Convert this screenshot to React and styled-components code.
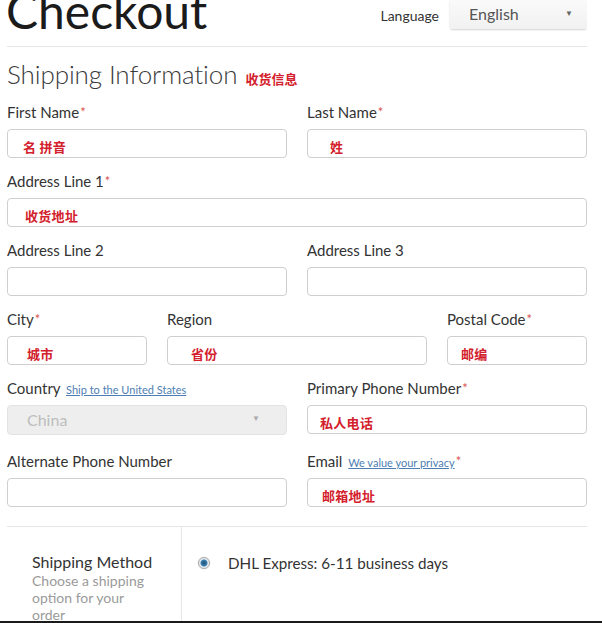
import styled, { createGlobalStyle } from "styled-components";

const GlobalStyle = createGlobalStyle`
    html, body {
        margin: 0;
        padding: 0;
        background: #fff;
        overflow: hidden;
    }
    body {
        font-family: Lato, "Liberation Sans", sans-serif;
        color: #333;
    }
`;

const Page = styled.div`
    width: 580px;
    margin-left: 7px;
    height: 621px;
    overflow: hidden;
`;

const BottomEdge = styled.div`
    height: 2px;
    background: #1a1a1a;
`;

const Header = styled.div`
    display: flex;
    justify-content: space-between;
    align-items: flex-start;
    height: 46px;
    border-bottom: 1px solid #e6e6e6;
`;

const Title = styled.h1`
    margin: -13px 0 0 -1px;
    font-size: 48px;
    line-height: 48px;
    font-weight: 400;
    color: #1b1b1b;
`;

const LangBox = styled.div`
    display: flex;
    align-items: flex-start;
    gap: 11px;
`;

const LangLabel = styled.span`
    font-size: 14px;
    line-height: 20px;
    color: #333;
    margin-top: 6px;
`;

const LangSelect = styled.div`
    width: 137px;
    height: 29px;
    box-sizing: border-box;
    display: flex;
    align-items: center;
    justify-content: space-between;
    padding: 0 14px 3px 19px;
    background: linear-gradient(#fafafa, #f1f1f1);
    border-radius: 0 0 3px 3px;
    box-shadow: 0 1px 2px rgba(0, 0, 0, 0.18);
    font-size: 16px;
    color: #555;
`;

const Caret = styled.span`
    font-size: 8px;
    color: #666;
`;

const SectionTitle = styled.h2`
    margin: 11px 0 0;
    font-size: 26px;
    line-height: 32px;
    font-weight: 300;
    color: #3a3a3a;
    display: flex;
    align-items: baseline;
    gap: 8px;
    letter-spacing: -0.1px;
`;

const Note = styled.span`
    font-family: "Noto Sans CJK SC", sans-serif;
    font-size: 13px;
    font-weight: 700;
    color: #d3202c;
    letter-spacing: 0;
`;

const Row = styled.div`
    display: grid;
    grid-template-columns: ${(p) => p.$cols || "1fr 1fr"};
    column-gap: 20px;
    margin-top: ${(p) => p.$top || 0}px;
    margin-bottom: ${(p) => p.$bottom || 0}px;
`;

const Field = styled.div`
    display: flex;
    flex-direction: column;
    margin-bottom: 16px;
`;

const Label = styled.label`
    font-size: 15px;
    line-height: 14px;
    height: 14px;
    margin-bottom: 10px;
    white-space: nowrap;
    color: #333;
`;

const Star = styled.span`
    color: #d9534f;
    font-size: 13px;
    vertical-align: 1px;
    margin-left: 1px;
`;

const Hint = styled.a`
    font-size: 11px;
    color: #4d7eb3;
    text-decoration: underline;
    margin-left: 2px;
`;

const Input = styled.div`
    height: ${(p) => (p.$disabled ? 30 : 29)}px;
    box-sizing: border-box;
    border: 1px solid ${(p) => (p.$disabled ? "#e3e3e3" : "#cfcfcf")};
    border-radius: 4px;
    background: ${(p) => (p.$disabled ? "#eeeeee" : "#fff")};
    display: flex;
    align-items: center;
    justify-content: space-between;
    padding: 2px 26px 0 ${(p) => p.$pad || 15}px;
`;

const Value = styled.span`
    font-family: "Noto Sans CJK SC", sans-serif;
    font-size: 13px;
    font-weight: 700;
    color: #d3202c;
    letter-spacing: 0.3px;
    margin-top: 4px;
`;

const Muted = styled.span`
    font-size: 16px;
    color: #bdbdbd;
    margin-top: -4px;
`;

const SelectCaret = styled(Caret)`
    color: #aaa;
    margin-top: -6px;
`;

const MethodSection = styled.div`
    display: grid;
    grid-template-columns: 175px 1fr;
    border-top: 1px solid #e6e6e6;
    margin-top: 3px;
    height: 120px;
`;

const MethodInfo = styled.div`
    padding: 25px 0 0 25px;
    border-right: 1px solid #e6e6e6;
`;

const MethodTitle = styled.div`
    font-size: 16px;
    line-height: 20px;
    color: #333;
`;

const MethodDesc = styled.div`
    font-size: 14px;
    line-height: 17px;
    color: #9a9a9a;
    width: 118px;
`;

const Option = styled.div`
    display: flex;
    align-items: center;
    gap: 18px;
    padding: 26px 0 0 16px;
    font-size: 15.2px;
    color: #333;
    height: 20px;
`;

const Radio = styled.span`
    width: 10px;
    height: 10px;
    border-radius: 50%;
    border: 1px solid #a8a8a8;
    background: radial-gradient(circle, #1d4f73 0, #3b7fae 3px, #e8eef3 4px);
    box-shadow: 0 0 1px rgba(0, 0, 0, 0.3);
`;

const req = <Star>*</Star>;

export default function App() {
    return (
        <>
            <GlobalStyle />
            <Page>
                <Header>
                    <Title>Checkout</Title>
                    <LangBox>
                        <LangLabel>Language</LangLabel>
                        <LangSelect>
                            English
                            <Caret>▼</Caret>
                        </LangSelect>
                    </LangBox>
                </Header>

                <SectionTitle>
                    Shipping Information <Note>收货信息</Note>
                </SectionTitle>

                <Row $top={10}>
                    <Field>
                        <Label>First Name{req}</Label>
                        <Input $pad={15}><Value>名 拼音</Value></Input>
                    </Field>
                    <Field>
                        <Label>Last Name{req}</Label>
                        <Input $pad={22}><Value>姓</Value></Input>
                    </Field>
                </Row>

                <Row $cols="1fr">
                    <Field>
                        <Label>Address Line 1{req}</Label>
                        <Input $pad={17}><Value>收货地址</Value></Input>
                    </Field>
                </Row>

                <Row>
                    <Field>
                        <Label>Address Line 2</Label>
                        <Input />
                    </Field>
                    <Field>
                        <Label>Address Line 3</Label>
                        <Input />
                    </Field>
                </Row>

                <Row $cols="140px 260px 140px">
                    <Field>
                        <Label>City{req}</Label>
                        <Input $pad={19}><Value>城市</Value></Input>
                    </Field>
                    <Field>
                        <Label>Region</Label>
                        <Input $pad={23}><Value>省份</Value></Input>
                    </Field>
                    <Field>
                        <Label>Postal Code{req}</Label>
                        <Input $pad={13}><Value>邮编</Value></Input>
                    </Field>
                </Row>

                <Row $bottom={3}>
                    <Field>
                        <Label>
                            Country <Hint>Ship to the United States</Hint>
                        </Label>
                        <Input $disabled $pad={19}>
                            <Muted>China</Muted>
                            <SelectCaret>▼</SelectCaret>
                        </Input>
                    </Field>
                    <Field>
                        <Label>Primary Phone Number{req}</Label>
                        <Input $pad={12}><Value>私人电话</Value></Input>
                    </Field>
                </Row>

                <Row>
                    <Field>
                        <Label>Alternate Phone Number</Label>
                        <Input />
                    </Field>
                    <Field>
                        <Label>
                            Email <Hint>We value your privacy</Hint>{req}
                        </Label>
                        <Input $pad={14}><Value>邮箱地址</Value></Input>
                    </Field>
                </Row>

                <MethodSection>
                    <MethodInfo>
                        <MethodTitle>Shipping Method</MethodTitle>
                        <MethodDesc>Choose a shipping option for your order</MethodDesc>
                    </MethodInfo>
                    <div>
                        <Option>
                            <Radio />
                            DHL Express: 6-11 business days
                        </Option>
                    </div>
                </MethodSection>
            </Page>
            <BottomEdge />
        </>
    );
}
